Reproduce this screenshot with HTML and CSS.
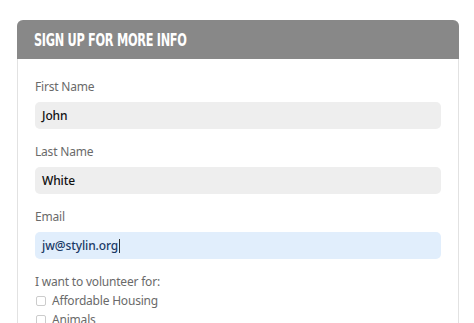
FILE: index.html
```html
<!DOCTYPE html>
<html>
<head>
<meta charset="utf-8">
<link rel="stylesheet" href="styles.css">
</head>
<body>
<div class="panel">
  <div class="panel-head"><span class="head-text">SIGN UP FOR MORE INFO</span></div>
  <form class="panel-body">
    <div class="field">
      <label class="lbl">First Name</label>
      <div class="input">John</div>
    </div>
    <div class="field">
      <label class="lbl">Last Name</label>
      <div class="input">White</div>
    </div>
    <div class="field">
      <label class="lbl">Email</label>
      <div class="input focus">jw@stylin.org<span class="caret"></span></div>
    </div>
    <div class="field">
      <label class="lbl">I want to volunteer for:</label>
      <div class="checks">
        <div class="check"><span class="box"></span>Affordable Housing</div>
        <div class="check"><span class="box"></span>Animals</div>
      </div>
    </div>
  </form>
</div>
</body>
</html>
```
FILE: styles.css
```css
html, body { margin: 0; padding: 0; background: #fff; }
body { padding: 20px 17px 0 17px; height: 323px; box-sizing: border-box; overflow: hidden; }
.panel {
  width: 440px;
  border: 1px solid #e2e2e2;
  border-top: none;
  border-radius: 6px 6px 0 0;
  font-family: "Noto Sans", "Open Sans", sans-serif;
}
.panel-head {
  background: #888;
  color: #fff;
  height: 39px;
  margin: 0 -1px;
  border-radius: 6px 6px 0 0;
  padding-left: 17px;
  display: flex;
  align-items: center;
}
.head-text {
  font-family: "DejaVu Sans", sans-serif;
  font-stretch: condensed;
  font-weight: bold;
  font-size: 17px;
  letter-spacing: -0.4px;
  display: inline-block;
  transform-origin: left center;
  transform: scaleX(0.74);
}
.panel-body { padding: 20px 17px 0 17px; display: flex; flex-direction: column; gap: 15px; }
.field { display: flex; flex-direction: column; gap: 7px; }
.lbl { color: #6a6a6a; font-size: 12px; line-height: 16px; letter-spacing: -0.2px; }
.input {
  background: #eee;
  border-radius: 5px;
  height: 27px;
  box-sizing: border-box;
  padding: 0 7px;
  display: flex;
  align-items: center;
  font-size: 12px;
  color: #111;
  font-weight: 500;
  letter-spacing: -0.1px;
}
.input.focus { background: #e1eefc; color: #1b3a66; }
.caret { display: inline-block; width: 1px; height: 14px; background: #333; margin-left: 1px; }
.checks { display: flex; flex-direction: column; gap: 3px; margin-top: -4px; }
.check { display: flex; align-items: center; gap: 6px; color: #6a6a6a; font-size: 12px; line-height: 16px; letter-spacing: -0.2px; }
.box { width: 8px; height: 8px; border: 1px solid #ccc; border-radius: 2px; background: #fff; margin-left: 1px; }
```
